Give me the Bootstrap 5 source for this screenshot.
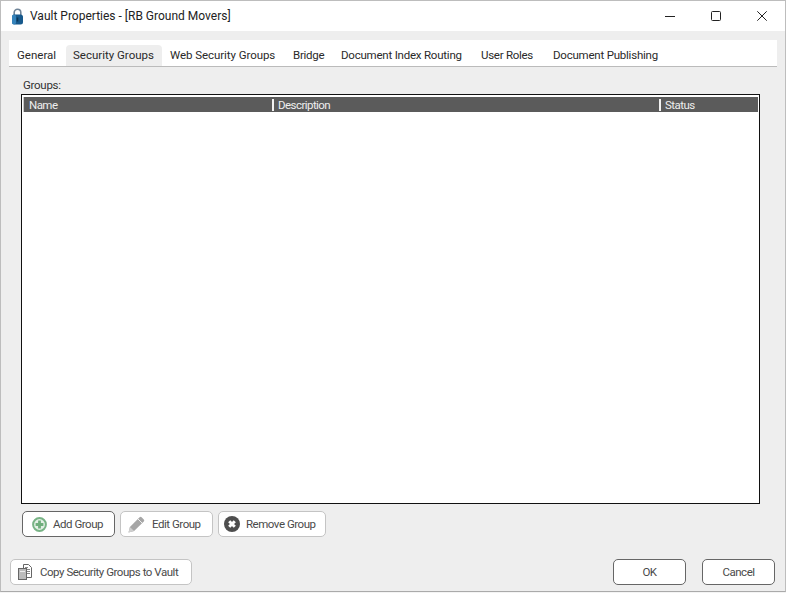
<!DOCTYPE html>
<html lang="en">
<head>
  <meta charset="UTF-8" />
  <title>Vault Properties</title>
  <link href="https://cdn.jsdelivr.net/npm/bootstrap@5.3.3/dist/css/bootstrap.min.css" rel="stylesheet" />
  <style>
    html, body { height: 100%; margin: 0; overflow: hidden; }
    body { background: #f4f4f4; font-family: Roboto, "Liberation Sans", sans-serif; font-size: 11.5px; letter-spacing: -0.27px; color: #333; }
    .vault-window { width: 786px; height: 592px; background: #eee; border: 1px solid #bdbdbd; border-bottom-color: #aaa; }
    .vault-title { height: 30px; background: #fff; color: #222; padding-left: 10px; }
    .vault-title .title-text { margin-left: 6px; font-size: 12px; letter-spacing: 0; }
    .win-btn { width: 46px; height: 30px; }
    .vault-body { padding: 9px 8px 0 8px; }
    .vault-tabs { height: 27px; background: #fff; border-bottom: 1px solid #bbb; width: 768px; flex-wrap: nowrap; align-items: flex-end; }
    .vault-tabs .nav-link { height: 21px; padding: 2px 0 0 8px; font-size: 11.5px; line-height: 16px; white-space: nowrap; border-radius: 4px 4px 0 0; color: #2a2a2a; }
    .vault-tabs .nav-link.active { background: #eee; padding-left: 7px; }
    .tab-general { width: 57px; letter-spacing: 0; }
    .tab-security { width: 96px; letter-spacing: 0; }
    .tab-web { width: 123px; letter-spacing: -0.06px; }
    .tab-bridge { width: 48px; }
    .tab-index { width: 140px; letter-spacing: -0.22px; }
    .tab-roles { width: 72px; }
    .tab-publish { width: 113px; letter-spacing: -0.22px; }
    .groups-label { margin: 10px 0 0 14px; height: 17px; line-height: 17px; }
    .groups-list { margin-left: 12px; width: 739px; height: 410px; background: #fff; border: 1px solid #111; padding: 2px 1px 0 1px; }
    .groups-head { height: 15px; padding-top: 1px; background: #5b5b5b; color: #eee; letter-spacing: -0.55px; border-left: 1px solid #c8c8c8; }
    .col-name, .col-desc, .col-status { height: 12px; line-height: 12px; }
    .col-name { width: 248px; padding-left: 5px; }
    .col-desc { width: 387px; padding-left: 4px; border-left: 2px solid #f2f2f2; }
    .col-status { padding-left: 4px; border-left: 2px solid #f2f2f2; }
    .vault-btn { height: 26px; font-size: 11.5px; letter-spacing: -0.47px; line-height: 24px; color: #4a4a4a; background: #fff; border: 1px solid #c4c4c4; border-radius: 5px; white-space: nowrap; }
    .vault-btn svg { flex-shrink: 0; }
    .vault-btn.is-dark { border-color: #666; }
    .group-actions { margin: 7px 0 0 13px; gap: 5px; }
    .btn-add { width: 93px; padding: 0 0 0 9px; gap: 6px; }
    .btn-edit { width: 93px; padding: 0 0 0 7px; gap: 7px; }
    .btn-remove { width: 108px; padding: 0 0 0 5px; gap: 6px; }
    .vault-footer { margin-top: 22px; padding: 0 2px 0 1px; }
    .btn-copy { width: 182px; padding: 0 0 0 6px; gap: 7px; }
    .btn-ok { width: 73px; padding: 0; }
    .btn-cancel { width: 73px; padding: 0; margin-left: 16px; }
  </style>
</head>
<body>
  <div class="vault-window d-flex flex-column">
    <!-- title bar -->
    <div class="vault-title d-flex align-items-center">
      <svg width="13" height="17" viewBox="0 0 13 17">
        <path d="M3.2 7V4.6a3.3 3.3 0 0 1 6.6 0V7" fill="none" stroke="#6f8498" stroke-width="1.6"/>
        <rect x="1" y="6.5" width="11" height="10" rx="2.5" fill="#17598c"/>
        <rect x="1" y="6.5" width="4" height="10" rx="2" fill="#3583bb"/>
        <rect x="5.7" y="9.5" width="1.6" height="4" fill="#0b3557"/>
      </svg>
      <span class="title-text flex-grow-1">Vault Properties - [RB Ground Movers]</span>
      <div class="d-flex">
        <div class="win-btn d-flex align-items-center justify-content-center">
          <svg width="10" height="10" viewBox="0 0 10 10"><path d="M0 5.5h10" stroke="#222" stroke-width="1"/></svg>
        </div>
        <div class="win-btn d-flex align-items-center justify-content-center">
          <svg width="10" height="10" viewBox="0 0 10 10"><rect x=".5" y=".5" width="9" height="9" rx="1" fill="none" stroke="#222"/></svg>
        </div>
        <div class="win-btn d-flex align-items-center justify-content-center">
          <svg width="10" height="10" viewBox="0 0 10 10"><path d="M.3.3l9.4 9.4M9.7.3L.3 9.7" stroke="#222" stroke-width="1"/></svg>
        </div>
      </div>
    </div>

    <div class="vault-body d-flex flex-column flex-grow-1">
      <!-- tabs -->
      <ul class="nav vault-tabs">
        <li class="nav-item"><a class="nav-link tab-general" href="#">General</a></li>
        <li class="nav-item"><a class="nav-link active tab-security" href="#">Security Groups</a></li>
        <li class="nav-item"><a class="nav-link tab-web" href="#">Web Security Groups</a></li>
        <li class="nav-item"><a class="nav-link tab-bridge" href="#">Bridge</a></li>
        <li class="nav-item"><a class="nav-link tab-index" href="#">Document Index Routing</a></li>
        <li class="nav-item"><a class="nav-link tab-roles" href="#">User Roles</a></li>
        <li class="nav-item"><a class="nav-link tab-publish" href="#">Document Publishing</a></li>
      </ul>

      <div class="groups-label">Groups:</div>

      <!-- list -->
      <div class="groups-list">
        <div class="groups-head d-flex align-items-center">
          <div class="col-name">Name</div>
          <div class="col-desc">Description</div>
          <div class="col-status">Status</div>
        </div>
      </div>

      <div class="group-actions d-flex">
        <button type="button" class="btn vault-btn is-dark btn-add d-flex align-items-center">
          <svg width="15" height="15" viewBox="0 0 15 15">
            <circle cx="7.5" cy="7.5" r="6.4" fill="#e4f0e6" stroke="#78b385" stroke-width="2"/>
            <path d="M7.5 3.6v7.8M3.6 7.5h7.8" stroke="#6fae7c" stroke-width="2.8"/>
          </svg>
          <span>Add Group</span>
        </button>
        <button type="button" class="btn vault-btn btn-edit d-flex align-items-center">
          <svg width="17" height="17" viewBox="0 0 17 17">
            <path d="M.5 16.5l1.4-5.6L11.6 1.2a1.4 1.4 0 0 1 2 0l2.2 2.2a1.4 1.4 0 0 1 0 2l-9.7 9.7z" fill="#a6a6a6"/>
            <path d="M10 3l4 4" stroke="#eee" stroke-width="1"/>
            <path d="M.5 16.5l1.4-5.6 4.2 4.2z" fill="#cfcfcf"/>
          </svg>
          <span>Edit Group</span>
        </button>
        <button type="button" class="btn vault-btn btn-remove d-flex align-items-center">
          <svg width="16" height="16" viewBox="0 0 16 16">
            <circle cx="8" cy="8" r="8" fill="#4e4e4e"/>
            <path d="M5.2 5.2l5.6 5.6M10.8 5.2l-5.6 5.6" stroke="#fff" stroke-width="3"/>
          </svg>
          <span>Remove Group</span>
        </button>
      </div>

      <div class="vault-footer d-flex justify-content-between">
        <button type="button" class="btn vault-btn btn-copy d-flex align-items-center">
          <svg width="16" height="16" viewBox="0 0 16 16">
            <path d="M6.5 .5h5l3 3v10h-8z" fill="#fff" stroke="#666"/>
            <path d="M8 3.5h3M8 5.5h5M8 7.5h5M10 9.5h3" stroke="#888"/>
            <rect x="1.5" y="4.5" width="8" height="11" fill="#bbb" stroke="#666"/>
            <path d="M3 7.5h5" stroke="#eee"/>
          </svg>
          <span>Copy Security Groups to Vault</span>
        </button>
        <div class="d-flex">
          <button type="button" class="btn vault-btn is-dark btn-ok">OK</button>
          <button type="button" class="btn vault-btn is-dark btn-cancel">Cancel</button>
        </div>
      </div>
    </div>
  </div>

  <script src="https://cdn.jsdelivr.net/npm/bootstrap@5.3.3/dist/js/bootstrap.bundle.min.js"></script>
</body>
</html>
